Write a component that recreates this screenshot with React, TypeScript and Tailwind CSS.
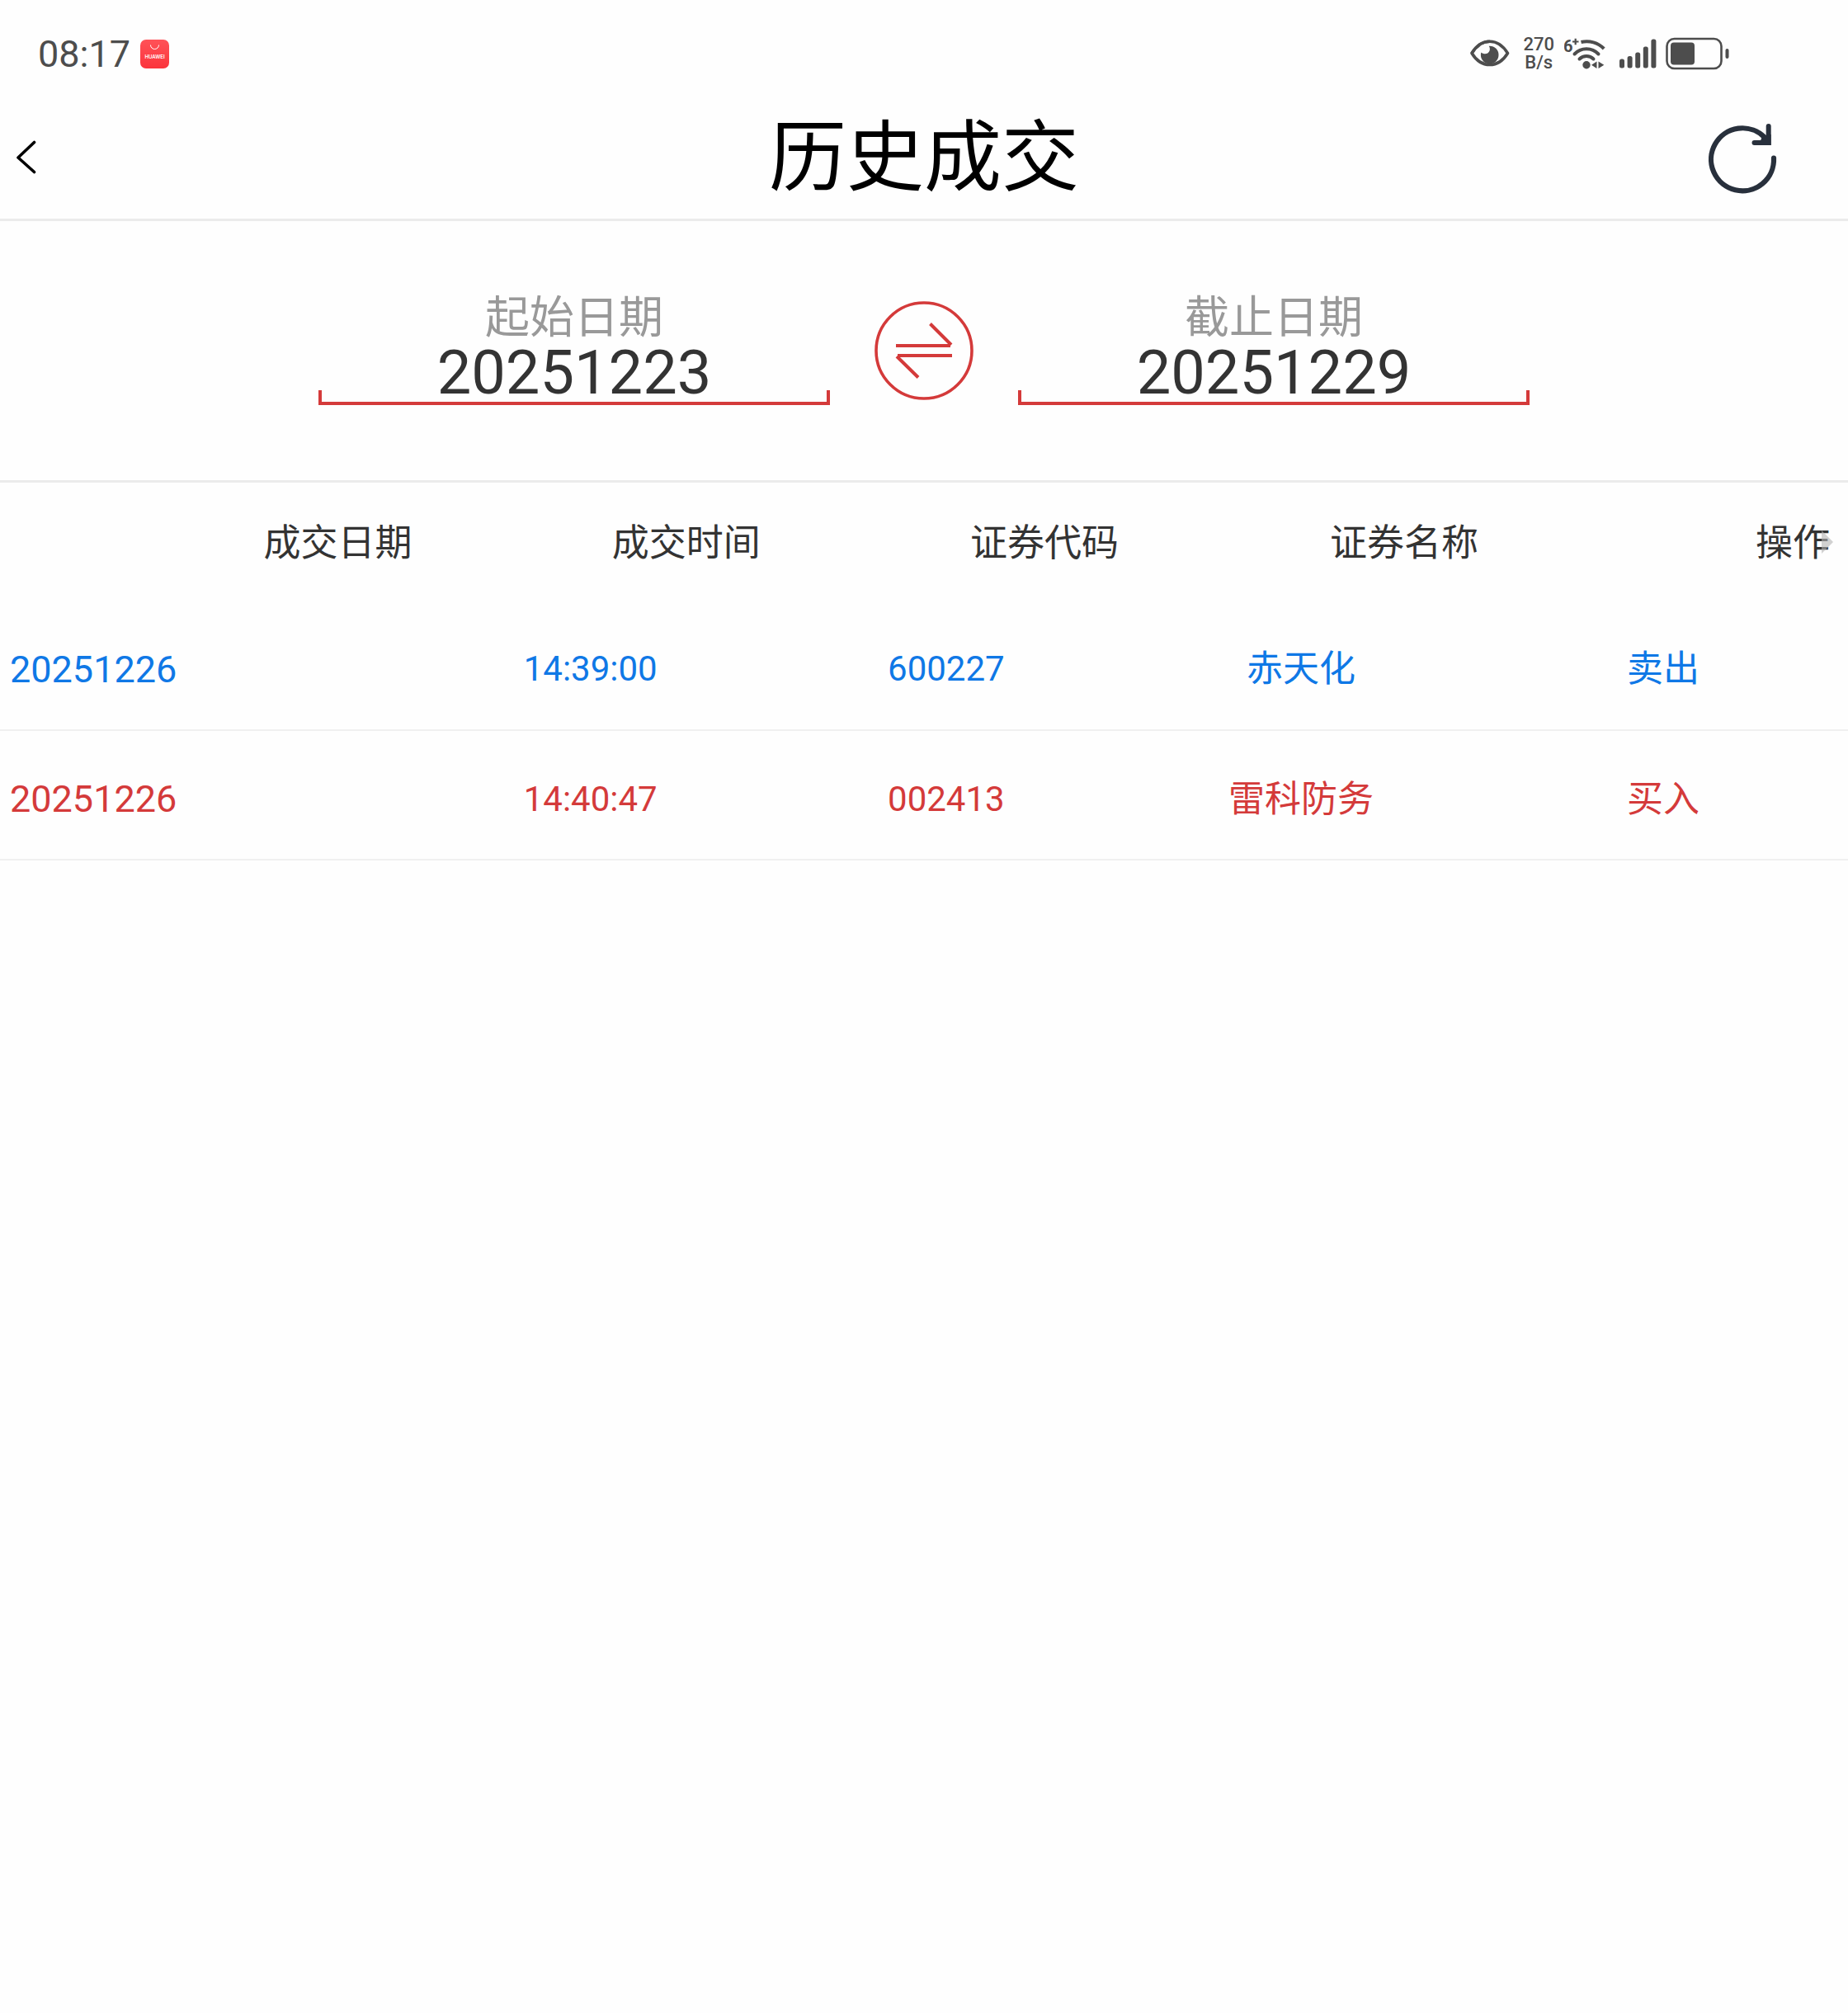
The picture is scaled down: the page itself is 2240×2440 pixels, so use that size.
interface Trade {
  date: string;
  time: string;
  code: string;
  name: string;
  side: "买入" | "卖出";
}

const trades: Trade[] = [
  { date: "20251226", time: "14:39:00", code: "600227", name: "赤天化", side: "卖出" },
  { date: "20251226", time: "14:40:47", code: "002413", name: "雷科防务", side: "买入" },
];

function AppBadge() {
  return (
    <svg width="35" height="35" viewBox="0 0 35 35" aria-hidden="true">
      <defs>
        <linearGradient id="badge" x1="0" y1="0" x2="0" y2="1">
          <stop offset="0" stopColor="#ff5258" />
          <stop offset="1" stopColor="#fb343c" />
        </linearGradient>
      </defs>
      <rect width="35" height="35" rx="7" fill="url(#badge)" />
      <path d="M12.5 6.5a5 5 0 0 0 10 0" fill="none" stroke="#fff" strokeWidth="1" />
      <text
        x="17.5"
        y="22.5"
        textAnchor="middle"
        fontSize="6"
        fontWeight="600"
        fill="#fff"
        fontFamily="Inter, sans-serif"
      >
        HUAWEI
      </text>
    </svg>
  );
}

function EyeIcon() {
  return (
    <svg width="48" height="34" viewBox="0 0 48 34" aria-hidden="true">
      <path
        d="M2 16.5C7.5 7.5 15 2.2 23.7 2.2S40 7.5 45.5 16.5C40 25.5 32.5 30.5 23.7 30.5S7.5 25.5 2 16.5Z"
        fill="none"
        stroke="#4d4d4d"
        strokeWidth="3.6"
        strokeLinejoin="round"
      />
      <circle cx="23.7" cy="18.5" r="10.8" fill="#4d4d4d" />
      <path d="M11 6h10.5c2.8 3.2 3 6.5 1.2 9-2.2 2.8-6 3-10 .2Z" fill="#fefefe" />
      <path d="M2 16.5C7.5 7.5 15 2.2 23.7 2.2" fill="none" stroke="#4d4d4d" strokeWidth="3.6" />
    </svg>
  );
}

function WifiIcon() {
  return (
    <svg width="51" height="40" viewBox="0 0 51 40" aria-hidden="true">
      <g fill="none" stroke="#4d4d4d" strokeWidth="4">
        <path d="M20.5 6A29 29 0 0 1 48.2 14" />
        <path d="M12.5 20.5A20 20 0 0 1 41.5 20.5" strokeLinecap="round" />
        <path d="M18.5 26.5A12 12 0 0 1 35.500 26.500" strokeLinecap="round" />
      </g>
      <circle cx="27" cy="33.7" r="4.7" fill="#4d4d4d" />
      <path d="M33 33.7l6.5-4.2v8.4ZM41.5 29.5l6.8 4.2-6.8 4.2Z" fill="#4d4d4d" />
      <path d="M10 5.5h7.5M13.7 1.8v7.5" stroke="#4d4d4d" strokeWidth="2.2" />
      <text x="-1" y="17.5" fontSize="20" fontWeight="700" fill="#4d4d4d" fontFamily="Roboto, sans-serif">
        6
      </text>
    </svg>
  );
}

function SignalIcon() {
  return (
    <svg width="46" height="36" viewBox="0 0 46 36" fill="#4d4d4d" aria-hidden="true">
      <rect x="0" y="24.5" width="6" height="11" rx="2.5" />
      <rect x="9.6" y="21" width="6" height="14.5" rx="2.5" />
      <rect x="19.2" y="16.5" width="6" height="19" rx="2.5" />
      <rect x="28.8" y="9.5" width="6" height="26" rx="2.5" />
      <rect x="38.4" y="0.5" width="6" height="35" rx="2.5" />
    </svg>
  );
}

function BatteryIcon() {
  return (
    <svg width="77" height="40" viewBox="0 0 77 40" aria-hidden="true">
      <rect x="1.5" y="2" width="66" height="36" rx="9" fill="none" stroke="#4d4d4d" strokeWidth="2.6" />
      <rect x="6" y="6.5" width="29" height="27" rx="4" fill="#4d4d4d" />
      <rect x="72.5" y="14" width="4" height="12" rx="2" fill="#4d4d4d" />
    </svg>
  );
}

function StatusBar() {
  return (
    <div className="flex h-[130px] items-center justify-between pr-36 pl-[46px] text-[#4d4d4d]">
      <div className="flex items-center gap-3">
        <span className="text-[45px] leading-none">08:17</span>
        <AppBadge />
      </div>
      <div className="flex items-center">
        <EyeIcon />
        <div className="ml-4 text-center text-[22px] leading-[22px] font-medium">
          <div>270</div>
          <div>B/s</div>
        </div>
        <div className="ml-3 flex items-center gap-4">
          <WifiIcon />
          <SignalIcon />
        </div>
        <div className="ml-[10px]">
          <BatteryIcon />
        </div>
      </div>
    </div>
  );
}

function Header() {
  return (
    <header className="grid grid-cols-[1fr_auto_1fr] items-center h-[138px] pb-3 border-b-3 border-[#ebebeb]">
      <button type="button" aria-label="返回" className="justify-self-start p-4">
        <svg width="32" height="44" viewBox="0 0 32 44" aria-hidden="true">
          <path
            d="M25.5 2.5L6 21L25.5 38.5"
            fill="none"
            stroke="#000"
            strokeWidth="3.6"
            strokeLinecap="round"
            strokeLinejoin="round"
          />
        </svg>
      </button>
      <h1 className="text-[94px] leading-[104px] text-black">历史成交</h1>
      <button type="button" aria-label="刷新" className="justify-self-end mr-[82px]">
        <svg width="88" height="88" viewBox="0 0 88 88" aria-hidden="true">
          <path
            d="M80 43.5A38 38 0 1 1 69 18.500"
            fill="none"
            stroke="#28303c"
            strokeWidth="6.2"
            strokeLinecap="round"
          />
          <path
            d="M73.7 5V25H56.500"
            fill="none"
            stroke="#28303c"
            strokeWidth="6"
            strokeLinecap="round"
          />
          <path d="M66 17l10.700-2v13H62Z" fill="#28303c" />
        </svg>
      </button>
    </header>
  );
}

function DateField({ id, label, value }: { id: string; label: string; value: string }) {
  return (
    <div className="relative flex flex-col w-[620px]">
      <label htmlFor={id} className="text-center text-[54px] leading-[54px] text-[#999]">
        {label}
      </label>
      <input
        id={id}
        type="text"
        inputMode="numeric"
        defaultValue={value}
        className="w-full h-[78px] text-center text-[74px] leading-[78px] text-[#333] outline-none"
      />
      <span className="absolute inset-x-0 bottom-0 h-[18px] border-x-4 border-b-4 border-[#d43a3a] pointer-events-none" />
    </div>
  );
}

function DateRange() {
  return (
    <section className="flex justify-center items-center gap-[54px] pt-[91px] pb-[91px] border-b-3 border-[#ebebeb]">
      <DateField id="start" label="起始日期" value="20251223" />
      <button type="button" aria-label="查询">
        <svg width="120" height="120" viewBox="0 0 120 120" fill="none" stroke="#d43a3a" aria-hidden="true">
          <circle cx="60" cy="60" r="58" strokeWidth="3.6" />
          <path d="M26 54H92M67.5 27.5L93 53" strokeWidth="4" />
          <path d="M94 66H28M27 67L53 92.5" strokeWidth="4" />
        </svg>
      </button>
      <DateField id="end" label="截止日期" value="20251229" />
    </section>
  );
}

function TradeTable() {
  return (
    <div className="relative">
      <table className="w-full table-fixed">
        <colgroup>
          <col className="w-[22.3%]" />
          <col className="w-[19.3%]" />
          <col className="w-[19.2%]" />
          <col className="w-[19.2%]" />
          <col className="w-[20%]" />
        </colgroup>
        <thead>
          <tr className="h-[143px] text-right text-[45px] leading-none text-[#333]">
            <th className="pt-1 font-normal">成交日期</th>
            <th className="pt-1 pr-[10px] font-normal">成交时间</th>
            <th className="pt-1 pr-[6px] font-normal">证券代码</th>
            <th className="pt-1 font-normal">证券名称</th>
            <th className="pt-1 pr-[22px] font-normal">操作</th>
          </tr>
        </thead>
        <tbody>
          {trades.map((trade) => (
            <tr
              key={trade.code}
              className={`h-[157px] border-b-2 border-[#f0f0f0] text-center leading-none ${
                trade.side === "买入" ? "text-[#d43a3a]" : "text-[#0f78e6]"
              }`}
            >
              <td className="pt-[10px] pl-3 text-left text-[45px]">{trade.date}</td>
              <td className="pt-[10px] text-[42px]">{trade.time}</td>
              <td className="pt-[10px] text-[42px]">{trade.code}</td>
              <td className="pt-[10px] text-[44px]">{trade.name}</td>
              <td className="pt-[10px] text-[44px]">{trade.side}</td>
            </tr>
          ))}
        </tbody>
      </table>
      {/* more columns to the right */}
      <svg
        className="absolute top-[58px] right-[18px]"
        width="14"
        height="28"
        viewBox="0 0 14 28"
        aria-hidden="true"
      >
        <path d="M0 0L14 14L0 28Z" fill="#b3b3b3" fillOpacity="0.6" />
      </svg>
    </div>
  );
}

export default function App() {
  return (
    <div className="min-h-screen bg-[#fefefe] font-[Roboto,'Noto_Sans_CJK_SC',sans-serif]">
      <StatusBar />
      <Header />
      <main>
        <DateRange />
        <TradeTable />
      </main>
    </div>
  );
}
